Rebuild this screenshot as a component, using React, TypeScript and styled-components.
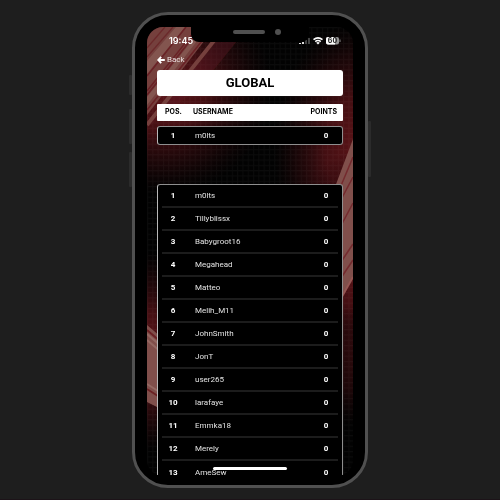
import React from "react";
import styled, { createGlobalStyle } from "styled-components";

const GlobalStyle = createGlobalStyle`
  *, *::before, *::after { box-sizing: border-box; }
  body {
    margin: 0;
    background: #1e1e1e;
    color: #fff;
    font-family: Roboto, "Liberation Sans", sans-serif;
  }
`;

const Page = styled.main`
  min-height: 100vh;
  display: flex;
  align-items: center;
  justify-content: center;
  border-bottom: 1px solid #1c1318;
`;

const Phone = styled.div`
  position: relative;
  display: flex;
  width: 100%;
  max-width: 236px;
  aspect-ratio: 236 / 476;
  padding: 12px 12px 9px;
  border: 3px solid #505050;
  border-radius: 36px;
  background: #000;
`;

const SideKey = styled.span<{ $side: "left" | "right"; $top: number; $length: number }>`
  position: absolute;
  ${(p) => p.$side}: -6px;
  top: ${(p) => p.$top}px;
  width: 3px;
  height: ${(p) => p.$length}px;
  border-radius: 1px;
  background: #2b2b2b;
`;

const Screen = styled.div`
  position: relative;
  flex: 1;
  min-width: 0;
  overflow: hidden;
  display: flex;
  flex-direction: column;
  border-radius: 16px;
`;

const Backdrop = styled.svg`
  position: absolute;
  inset: 0;
  width: 100%;
  height: 100%;
`;

const Notch = styled.div`
  position: absolute;
  top: -4px;
  left: 44px;
  right: 44px;
  height: 19px;
  display: flex;
  align-items: center;
  justify-content: flex-end;
  gap: 10px;
  padding-right: 28px;
  border-radius: 0 0 8px 8px;
  background: #000;
`;

const Speaker = styled.span`
  width: 32px;
  height: 4px;
  border-radius: 2px;
  background: #505050;
`;

const Camera = styled.span`
  width: 6px;
  height: 6px;
  border-radius: 50%;
  background: #505050;
`;

const StatusBar = styled.header`
  position: relative;
  display: flex;
  justify-content: space-between;
  align-items: center;
  height: 26px;
  padding: 2px 12px 0 22px;
  font: 600 9px Inter, "Liberation Sans", sans-serif;
`;

const StatusIcons = styled.svg`
  display: block;
  width: 43px;
  height: 9px;
`;

const Content = styled.div`
  position: relative;
  flex: 1;
  min-height: 0;
  display: flex;
  flex-direction: column;
  padding: 0 10px;
`;

const BackLink = styled.a`
  display: flex;
  align-items: center;
  align-self: flex-start;
  gap: 2px;
  height: 14px;
  color: #e9dede;
  font-size: 8px;
  line-height: 14px;
  text-decoration: none;
`;

const ArrowIcon = styled.svg`
  width: 8px;
  height: 8px;
`;

const Title = styled.h1`
  margin: 3px 0 8px;
  border-radius: 3px;
  background: #fff;
  color: #000;
  font-size: 13px;
  font-weight: 700;
  line-height: 26px;
  text-align: center;
`;

const Board = styled.table`
  display: flex;
  flex-direction: column;
  font-size: 8px;
  line-height: 10px;
`;

const HeadSection = styled.thead`
  display: block;
  border-radius: 1px;
  background: #fff;
  color: #000;
`;

const HeadRow = styled.tr`
  display: grid;
  grid-template-columns: 28px 1fr auto;
  align-items: center;
  height: 17px;
  padding: 0 6px 0 8px;
`;

const HeadCell = styled.th`
  padding: 0;
  font: 700 7px/10px Inter, "Liberation Sans", sans-serif;
  text-align: left;
`;

const Section = styled.tbody<{ $gap: number }>`
  display: block;
  margin-top: ${(p) => p.$gap}px;
  padding: 0 4px;
  border: 1px solid #8f8f8f;
  border-left-color: #b9b9b9;
  border-radius: 3px;
  background: #000;
`;

const Row = styled.tr<{ $compact?: boolean }>`
  display: grid;
  grid-template-columns: 22px 1fr 24px;
  align-items: center;
  column-gap: 11px;
  height: ${(p) => (p.$compact ? 17 : 23)}px;

  &:not(:last-child) { border-bottom: 2px solid #1c1c1c; }
`;

const Cell = styled.td<{ $strong?: boolean }>`
  padding: 2px 0 0;
  color: ${(p) => (p.$strong ? "#fff" : "#e2e2e2")};
  font-weight: ${(p) => (p.$strong ? 700 : 400)};
  text-align: ${(p) => (p.$strong ? "center" : "left")};
`;

const HomeIndicator = styled.span`
  position: absolute;
  left: 50%;
  bottom: 6px;
  width: 74px;
  height: 3px;
  margin-left: -37px;
  border-radius: 2px;
  background: #fff;
`;

const players = [
  "m0lts", "Tillyblissx", "Babygroot16", "Megahead", "Matteo", "Melih_M11",
  "JohnSmith", "JonT", "user265", "larafaye", "Emmka18", "Merely", "AmeSew",
];

function Player({ rank, name, compact }: { rank: number; name: string; compact?: boolean }) {
  return (
    <Row $compact={compact}>
      <Cell $strong>{rank}</Cell>
      <Cell>{name}</Cell>
      <Cell $strong>0</Cell>
    </Row>
  );
}

function ScreenBackdrop() {
  return (
    <Backdrop viewBox="0 0 206 449" preserveAspectRatio="none" aria-hidden="true">
      <defs>
        <radialGradient id="glow">
          <stop offset="0" stopColor="#5c1418" />
          <stop offset="0.4" stopColor="#4b1014" stopOpacity=".9" />
          <stop offset="0.75" stopColor="#300a0d" stopOpacity=".45" />
          <stop offset="1" stopColor="#1c0406" stopOpacity="0" />
        </radialGradient>
        <pattern id="grid" width="5.3" height="5.3" patternUnits="userSpaceOnUse">
          <path d="M0 .5H5.3M.5 0V5.3" stroke="#fff" strokeOpacity=".035" strokeWidth="1" />
        </pattern>
        <filter id="soft"><feGaussianBlur stdDeviation=".6" /></filter>
      </defs>
      <rect width="206" height="449" fill="#020202" />
      <ellipse cx="14" cy="62" rx="112" ry="105" fill="url(#glow)" />
      <ellipse cx="212" cy="120" rx="86" ry="125" fill="url(#glow)" />
      <ellipse cx="206" cy="235" rx="60" ry="110" fill="url(#glow)" />
      <ellipse cx="0" cy="325" rx="70" ry="100" fill="url(#glow)" />
      <ellipse cx="206" cy="340" rx="40" ry="60" fill="url(#glow)" opacity=".4" />
      <rect width="206" height="449" fill="url(#grid)" />
      <g filter="url(#soft)">
        <path d="M0 0H68L0 88Z" fill="#74413e" />
        <path d="M0 34L29 0H38L0 47ZM0 70L56 0H61L0 78Z" fill="#835550" />
        <path d="M0 49L39 0M0 64L51 0M0 68L54 0M0 83L66 0" fill="none" stroke="#6a2226" strokeWidth="1.6" />
        <path d="M0 21L18 0M0 30L26 0" fill="none" stroke="#6c2a2c" strokeWidth="1.4" />
        <path d="M0 98L78 0" stroke="#74413e" strokeWidth="4" />
        <path d="M0 101L78 3H99L53 60Z" fill="#5d1d20" opacity=".4" />
        <path d="M206 112L188 160V282L206 250Z" fill="#80504c" />
        <path d="M206 130L188 173M206 150L188 184M206 176L188 210M206 217L188 244M206 233L188 260" stroke="#742c2f" strokeWidth="1.6" />
        <path d="M206 250L188 282" stroke="#955552" strokeWidth="2" />
        <path d="M0 298L14 310V382L0 375Z" fill="#80504c" />
        <path d="M0 307L14 319M0 313L14 325M0 357L14 366" stroke="#946862" strokeWidth="2" />
        <path d="M0 303L14 315M0 362L14 371" stroke="#6b2024" strokeWidth="2" />
      </g>
    </Backdrop>
  );
}

export default function App() {
  return (
    <>
      <GlobalStyle />
      <Page>
        <Phone>
          <SideKey $side="left" $top={60} $length={20} />
          <SideKey $side="left" $top={94} $length={35} />
          <SideKey $side="left" $top={137} $length={35} />
          <SideKey $side="right" $top={106} $length={56} />
          <Screen>
            <ScreenBackdrop />
            <StatusBar>
              <time>19:45</time>
              <StatusIcons viewBox="0 0 43 9" role="img" aria-label="Signal, Wi-Fi, battery 60%">
                <path d="M2 7V8M5 6V8" stroke="#ddd" strokeWidth="2" />
                <path d="M8 4V8M11 2V8" stroke="#444" strokeWidth="2" />
                <path d="M15.5 3.7Q20 0 24.5 3.7M17.2 5.6Q20 3.3 22.8 5.6" fill="none" stroke="#fff" strokeWidth="1.5" />
                <path d="M18.2 6.8Q20 5.4 21.8 6.8L20 8.6Z" fill="#fff" />
                <rect x="28" y="1" width="13" height="7.4" rx="2" fill="#999" />
                <path d="M30 1H37V8.4H30A2 2 0 0 1 28 6.4V3A2 2 0 0 1 30 1Z" fill="#fff" />
                <path d="M42 3.5V6" stroke="#888" />
                <text x="34.5" y="7.3" textAnchor="middle" fontSize="7" fontWeight="700" fill="#222">60</text>
              </StatusIcons>
            </StatusBar>
            <Notch>
              <Speaker />
              <Camera />
            </Notch>
            <Content>
              <BackLink href="#">
                <ArrowIcon viewBox="0 0 8 8" aria-hidden="true">
                  <path d="M4.2 .8L1.2 4L4.2 7.2M1.4 4H7.8" fill="none" stroke="#fff" strokeWidth="1.9" />
                </ArrowIcon>
                Back
              </BackLink>
              <Title>GLOBAL</Title>
              <Board>
                <HeadSection>
                  <HeadRow>
                    <HeadCell scope="col">POS.</HeadCell>
                    <HeadCell scope="col">USERNAME</HeadCell>
                    <HeadCell scope="col">POINTS</HeadCell>
                  </HeadRow>
                </HeadSection>
                <Section $gap={5}>
                  <Player rank={1} name="m0lts" compact />
                </Section>
                <Section $gap={39}>
                  {players.map((name, i) => (
                    <Player key={name} rank={i + 1} name={name} />
                  ))}
                </Section>
              </Board>
            </Content>
            <HomeIndicator />
          </Screen>
        </Phone>
      </Page>
    </>
  );
}
